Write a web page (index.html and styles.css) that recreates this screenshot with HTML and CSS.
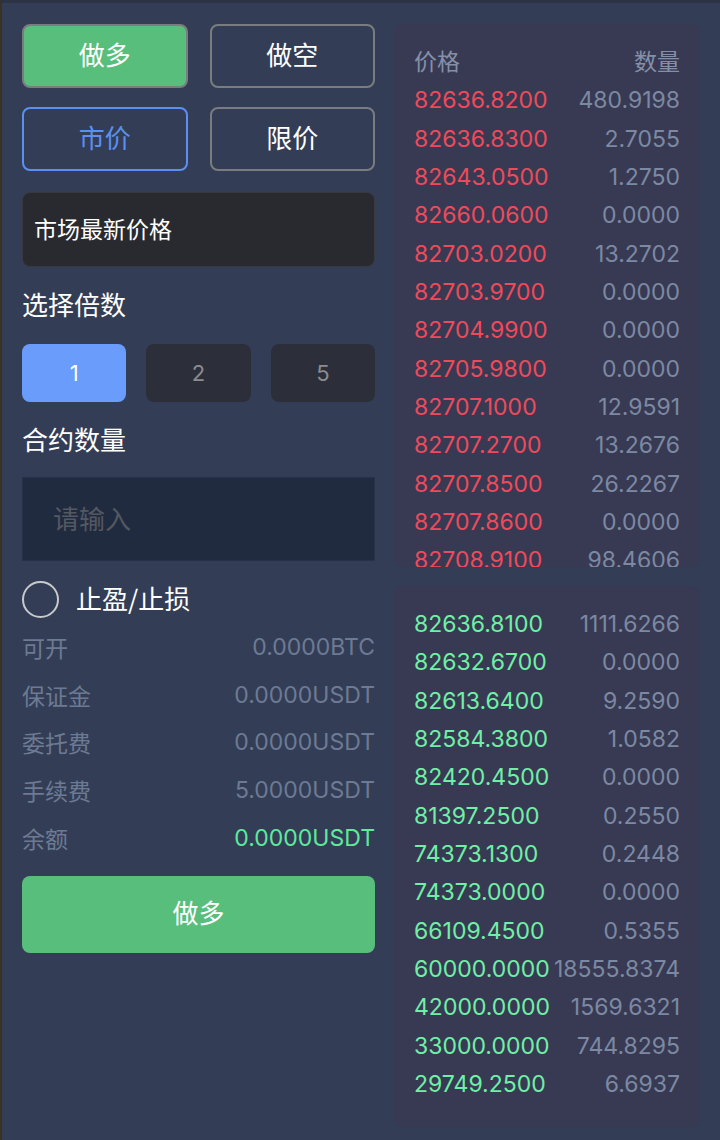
FILE: index.html
```html
<!DOCTYPE html>
<html lang="zh-CN">
<head>
<meta charset="utf-8">
<title>合约交易</title>
<link rel="stylesheet" href="styles.css">
</head>
<body>
<div class="page">
  <div class="left">
    <div class="pair">
      <button class="btn btn-long">做多</button>
      <button class="btn btn-outline">做空</button>
    </div>
    <div class="pair pair-2">
      <button class="btn btn-outline btn-active">市价</button>
      <button class="btn btn-outline">限价</button>
    </div>
    <div class="price-box">市场最新价格</div>
    <div class="label">选择倍数</div>
    <div class="mults">
      <div class="mult mult-on">1</div>
      <div class="mult">2</div>
      <div class="mult">5</div>
    </div>
    <div class="label">合约数量</div>
    <div class="qty-input">请输入</div>
    <div class="tpsl"><span class="radio"></span><span class="tpsl-text">止盈/止损</span></div>
    <div class="info">
      <div class="info-row"><span>可开</span><span>0.0000BTC</span></div>
      <div class="info-row"><span>保证金</span><span>0.0000USDT</span></div>
      <div class="info-row"><span>委托费</span><span>0.0000USDT</span></div>
      <div class="info-row"><span>手续费</span><span>5.0000USDT</span></div>
      <div class="info-row"><span>余额</span><span class="balance">0.0000USDT</span></div>
    </div>
    <button class="submit">做多</button>
  </div>
  <div class="right">
    <div class="book book-asks">
      <div class="row head"><span>价格</span><span>数量</span></div>
      <div class="row"><span class="ask">82636.8200</span><span class="qty">480.9198</span></div>
      <div class="row"><span class="ask">82636.8300</span><span class="qty">2.7055</span></div>
      <div class="row"><span class="ask">82643.0500</span><span class="qty">1.2750</span></div>
      <div class="row"><span class="ask">82660.0600</span><span class="qty">0.0000</span></div>
      <div class="row"><span class="ask">82703.0200</span><span class="qty">13.2702</span></div>
      <div class="row"><span class="ask">82703.9700</span><span class="qty">0.0000</span></div>
      <div class="row"><span class="ask">82704.9900</span><span class="qty">0.0000</span></div>
      <div class="row"><span class="ask">82705.9800</span><span class="qty">0.0000</span></div>
      <div class="row"><span class="ask">82707.1000</span><span class="qty">12.9591</span></div>
      <div class="row"><span class="ask">82707.2700</span><span class="qty">13.2676</span></div>
      <div class="row"><span class="ask">82707.8500</span><span class="qty">26.2267</span></div>
      <div class="row"><span class="ask">82707.8600</span><span class="qty">0.0000</span></div>
      <div class="row"><span class="ask">82708.9100</span><span class="qty">98.4606</span></div>
    </div>
    <div class="book book-bids">
      <div class="row"><span class="bid">82636.8100</span><span class="qty">1111.6266</span></div>
      <div class="row"><span class="bid">82632.6700</span><span class="qty">0.0000</span></div>
      <div class="row"><span class="bid">82613.6400</span><span class="qty">9.2590</span></div>
      <div class="row"><span class="bid">82584.3800</span><span class="qty">1.0582</span></div>
      <div class="row"><span class="bid">82420.4500</span><span class="qty">0.0000</span></div>
      <div class="row"><span class="bid">81397.2500</span><span class="qty">0.2550</span></div>
      <div class="row"><span class="bid">74373.1300</span><span class="qty">0.2448</span></div>
      <div class="row"><span class="bid">74373.0000</span><span class="qty">0.0000</span></div>
      <div class="row"><span class="bid">66109.4500</span><span class="qty">0.5355</span></div>
      <div class="row"><span class="bid">60000.0000</span><span class="qty">18555.8374</span></div>
      <div class="row"><span class="bid">42000.0000</span><span class="qty">1569.6321</span></div>
      <div class="row"><span class="bid">33000.0000</span><span class="qty">744.8295</span></div>
      <div class="row"><span class="bid">29749.2500</span><span class="qty">6.6937</span></div>
    </div>
  </div>
</div>
</body>
</html>
```

FILE: styles.css
```css
* { box-sizing: border-box; }
html, body {
  margin: 0;
  padding: 0;
  background: #333e56;
}
body {
  font-family: "Inter", "Noto Sans CJK SC", sans-serif;
  color: #ffffff;
  width: 720px;
  height: 1140px;
  overflow: hidden;
}
.page {
  display: flex;
  gap: 19px;
  height: 1140px;
  border-top: 3px solid #2b3345;
  border-left: 2px solid #3b3128;
  padding: 21px 20px 0 20px;
}
.left {
  width: 353px;
  display: flex;
  flex-direction: column;
}
.pair {
  display: flex;
  gap: 22px;
}
.pair-2 { margin-top: 19px; }
.btn {
  flex: 1;
  height: 64px;
  border-radius: 8px;
  border: 2px solid #7b7c80;
  background: transparent;
  color: #ffffff;
  font-family: "Noto Sans CJK SC", sans-serif;
  font-size: 26px;
  padding: 0 0 5px 0;
}
.btn-long { background: #58be7c; }
.btn-active { border-color: #5b8ff0; color: #5b8ff0; }
.price-box {
  margin-top: 21px;
  height: 75px;
  border-radius: 8px;
  background: #292a2f;
  border: 1px solid #383a42;
  display: flex;
  align-items: center;
  padding: 0 0 3px 11px;
  font-family: "Noto Sans CJK SC", sans-serif;
  font-size: 23px;
}
.label {
  margin-top: 19px;
  height: 36px;
  line-height: 36px;
  font-family: "Noto Sans CJK SC", sans-serif;
  font-size: 26px;
}
.mults {
  margin-top: 22px;
  display: flex;
  gap: 20px;
}
.mult {
  flex: 1;
  height: 58px;
  border-radius: 8px;
  background: #2c2f3a;
  color: #8b8c90;
  font-size: 22px;
  display: flex;
  align-items: center;
  justify-content: center;
}
.mult-on { background: #6a9cfc; color: #ffffff; }
.qty-input {
  margin-top: 20px;
  height: 84px;
  background: #212b3f;
  border: 1px solid #27324a;
  display: flex;
  align-items: center;
  padding: 0 0 3px 30px;
  color: #535862;
  font-family: "Noto Sans CJK SC", sans-serif;
  font-size: 26px;
}
.tpsl {
  margin-top: 19px;
  height: 38px;
  display: flex;
  align-items: center;
}
.radio {
  width: 37px;
  height: 37px;
  border-radius: 50%;
  border: 2px solid #c9c9cb;
}
.tpsl-text {
  margin-left: 17px;
  padding-bottom: 3px;
  font-family: "Noto Sans CJK SC", sans-serif;
  font-size: 26px;
}
.info {
  margin-top: 5px;
  color: #6d7a93;
  font-size: 23px;
}
.info-row {
  height: 47.75px;
  display: flex;
  align-items: center;
  justify-content: space-between;
}
.balance { color: #5fe99d; }
.submit {
  margin-top: 14px;
  height: 77px;
  border: none;
  border-radius: 8px;
  background: #58be7c;
  color: #ffffff;
  font-family: "Noto Sans CJK SC", sans-serif;
  font-size: 26px;
  padding: 0 0 5px 0;
}
.right {
  width: 306px;
  display: flex;
  flex-direction: column;
}
.book {
  background: #383a53;
  border-radius: 8px;
  padding: 19px 20px 0 20px;
  font-size: 23px;
}
.book-asks {
  height: 543px;
  overflow: hidden;
}
.book-bids {
  margin-top: 19px;
  padding-bottom: 24px;
}
.row {
  height: 38.33px;
  display: flex;
  align-items: center;
  justify-content: space-between;
  white-space: nowrap;
}
.head {
  color: #8590a8;
  font-family: "Noto Sans CJK SC", sans-serif;
  padding-bottom: 4px;
}
.ask { color: #ef4a5b; }
.bid { color: #6ff0a6; }
.qty { color: #7c89a2; }
```
